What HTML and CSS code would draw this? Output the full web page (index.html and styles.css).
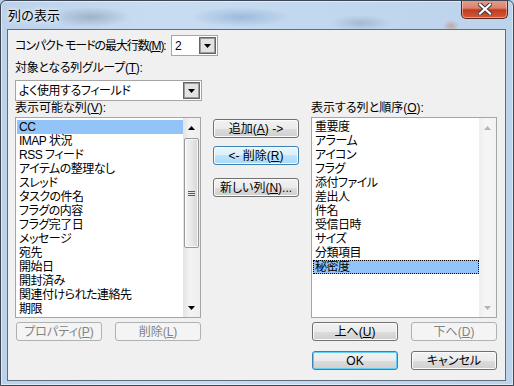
FILE: index.html
```html
<!DOCTYPE html>
<html lang="ja">
  <head>
    <meta charset="UTF-8" />
    <meta name="viewport" content="width=device-width, initial-scale=1.0" />
    <title>列の表示</title>
    <link rel="stylesheet" href="styles.css">
  </head>
  <body>
    <div class="window">
      <div class="titlebar">
        <span class="title">列の表示</span>
        <div class="close-btn">
          <svg width="14" height="12" viewBox="0 0 14 12">
            <path d="M2 1.5 L12 10.5 M12 1.5 L2 10.5" stroke="#3b3b3b" stroke-width="4.2" stroke-linecap="square" />
            <path d="M2 1.5 L12 10.5 M12 1.5 L2 10.5" stroke="#ffffff" stroke-width="2.2" stroke-linecap="square" />
          </svg>
        </div>
      </div>

      <div class="client">
        <div class="row-compact">
          <span class="lbl lbl-compact">コンパクト モードの最大行数(<u>M</u>):</span>
          <div class="combo combo-small">
            <span class="combo-text">2</span>
            <span class="drop">
              <svg width="7" height="4" viewBox="0 0 7 4"><polygon points="0,0 7,0 3.5,4" fill="#000" /></svg>
            </span>
          </div>
        </div>

        <div class="lbl lbl-group">対象となる列グループ(<u>T</u>):</div>
        <div class="combo combo-wide">
          <span class="combo-text">よく使用するフィールド</span>
          <span class="drop">
            <svg width="7" height="4" viewBox="0 0 7 4"><polygon points="0,0 7,0 3.5,4" fill="#000" /></svg>
          </span>
        </div>

        <div class="columns">
          <div class="lbl">表示可能な列(<u>V</u>):</div>
          <div></div>
          <div class="lbl">表示する列と順序(<u>O</u>):</div>

          <!-- available columns -->
          <div class="listbox">
            <ul class="items">
              <li class="selected">CC</li>
              <li>IMAP 状況</li>
              <li>RSS フィード</li>
              <li>アイテムの整理なし</li>
              <li>スレッド</li>
              <li>タスクの件名</li>
              <li>フラグの内容</li>
              <li>フラグ完了日</li>
              <li>メッセージ</li>
              <li>宛先</li>
              <li>開始日</li>
              <li>開封済み</li>
              <li>関連付けられた連絡先</li>
              <li>期限</li>
            </ul>
            <div class="scrollbar">
              <div class="arrow arrow-up">
                <svg width="7" height="4" viewBox="0 0 7 4"><polygon points="0,4 7,4 3.5,0" fill="#000" /></svg>
              </div>
              <div class="track">
                <div class="thumb"><span class="grip"></span></div>
              </div>
              <div class="arrow arrow-down">
                <svg width="7" height="4" viewBox="0 0 7 4"><polygon points="0,0 7,0 3.5,4" fill="#000" /></svg>
              </div>
            </div>
          </div>

          <div class="mid-buttons">
            <div class="btn">追加(<u>A</u>) -&gt;</div>
            <div class="btn btn-hot">&lt;- 削除(<u>R</u>)</div>
            <div class="btn btn-new">新しい列(<u>N</u>)...</div>
          </div>

          <!-- shown columns -->
          <div class="listbox">
            <ul class="items">
              <li>重要度</li>
              <li>アラーム</li>
              <li>アイコン</li>
              <li>フラグ</li>
              <li>添付ファイル</li>
              <li>差出人</li>
              <li>件名</li>
              <li>受信日時</li>
              <li>サイズ</li>
              <li>分類項目</li>
              <li class="selected focused">秘密度</li>
            </ul>
            <div class="scrollbar scrollbar-off">
              <div class="arrow arrow-up">
                <svg width="7" height="4" viewBox="0 0 7 4"><polygon points="0,4 7,4 3.5,0" fill="#b4b4b4" /></svg>
              </div>
              <div class="track"></div>
              <div class="arrow arrow-down">
                <svg width="7" height="4" viewBox="0 0 7 4"><polygon points="0,0 7,0 3.5,4" fill="#b4b4b4" /></svg>
              </div>
            </div>
          </div>

          <div class="btn-pair">
            <div class="btn btn-off">プロパティ(<u>P</u>)</div>
            <div class="btn btn-off">削除(<u>L</u>)</div>
          </div>
          <div></div>
          <div class="btn-pair">
            <div class="btn">上へ(<u>U</u>)</div>
            <div class="btn btn-off">下へ(<u>D</u>)</div>
          </div>

          <div></div>
          <div></div>
          <div class="btn-pair ok-row">
            <div class="btn btn-default">OK</div>
            <div class="btn">キャンセル</div>
          </div>
        </div>
      </div>
    </div>
  </body>
</html>
```

FILE: styles.css
```css
body {
  margin: 0;
  padding: 0;
  font-family: "Liberation Sans", "Noto Sans CJK JP", sans-serif;
  font-size: 12px;
  color: #000;
  background-color: #b9cfe6;
}

.window {
  width: 514px;
  height: 386px;
  box-sizing: border-box;
  border: 1px solid #3d4754;
  border-radius: 6px 6px 0 0;
  display: flex;
  flex-direction: column;
  overflow: hidden;
  background:
    radial-gradient(ellipse 40px 10px at 90px 16px, rgba(90, 110, 130, 0.35), transparent),
    radial-gradient(ellipse 50px 10px at 240px 16px, rgba(70, 110, 170, 0.3), transparent),
    radial-gradient(ellipse 30px 8px at 360px 22px, rgba(80, 100, 120, 0.25), transparent),
    radial-gradient(ellipse 8px 6px at 450px 25px, rgba(200, 120, 90, 0.5), transparent),
    linear-gradient(to right, #bcd2ea 0%, #c8dcf1 30%, #c2d8ef 60%, #bcd3ec 100%);
  box-shadow: inset 0 0 0 1px rgba(255, 255, 255, 0.5);
}

.titlebar {
  height: 28px;
  display: flex;
  align-items: flex-start;
  justify-content: space-between;
}

.title {
  margin: 8px 0 0 7px;
  font-size: 13px;
  line-height: 14px;
  text-shadow: 0 0 6px rgba(255, 255, 255, 0.9), 0 0 3px rgba(255, 255, 255, 0.9);
}

.close-btn {
  width: 47px;
  height: 19px;
  margin-right: 5px;
  margin-top: -1px;
  box-sizing: border-box;
  border: 1px solid #5e2219;
  border-top: none;
  border-radius: 0 0 5px 5px;
  background: linear-gradient(#e8a08d 0%, #d9826c 45%, #c4391d 55%, #cf5c3a 100%);
  box-shadow: inset 0 0 0 1px rgba(255, 220, 210, 0.5);
  display: flex;
  align-items: center;
  justify-content: center;
}

.client {
  flex: 1;
  margin: 0 7px 4px 6px;
  border: 1px solid #5f6d7c;
  background-color: #f0f0f0;
  padding: 5px 7px 0 7px;
  font-feature-settings: "palt" 1;
}

.lbl {
  line-height: 14px;
  white-space: nowrap;
}

u {
  text-decoration: underline;
  text-underline-offset: 1px;
}

.row-compact {
  display: flex;
  align-items: center;
  height: 21px;
}

.lbl-compact {
  width: 156px;
  letter-spacing: -1.1px;
}

.lbl-group {
  margin-top: 5px;
  letter-spacing: -0.3px;
}

/* combo boxes */
.combo {
  height: 21px;
  box-sizing: border-box;
  border: 1px solid #a5a5a5;
  background-color: #fff;
  display: flex;
  align-items: center;
  justify-content: space-between;
}

.combo-small {
  width: 47px;
}

.combo-wide {
  width: 187px;
  margin-top: 5px;
}

.combo-text {
  padding-left: 3px;
  line-height: 14px;
  letter-spacing: -0.4px;
}

.drop {
  width: 17px;
  height: 17px;
  margin-right: 1px;
  box-sizing: border-box;
  border: 1px solid #646464;
  box-shadow: inset 0 0 0 1px #9a9a9a;
  background-color: #e2e2e2;
  display: flex;
  align-items: center;
  justify-content: center;
}

/* lists + buttons */
.columns {
  display: grid;
  grid-template-columns: 186px 86px 186px;
  column-gap: 12px;
}

.listbox {
  margin-top: 2px;
  height: 201px;
  box-sizing: border-box;
  border: 1px solid #a5a5a5;
  background-color: #fff;
  display: flex;
}

.items {
  flex: 1;
  list-style: none;
  margin: 0;
  padding: 2px 0 0 1px;
}

.items li {
  height: 14px;
  line-height: 14px;
  padding-left: 2px;
  white-space: nowrap;
  letter-spacing: -0.5px;
}

.items li.selected {
  background-color: #92c4f8;
}

.items li.focused {
  outline: 1px dotted #000;
  outline-offset: -1px;
}

.scrollbar {
  width: 17px;
  display: flex;
  flex-direction: column;
  background: linear-gradient(to right, #e3e3e3, #f3f3f3 40%, #eeeeee);
}

.scrollbar-off {
  background: linear-gradient(to right, #eeeeee, #f6f6f6 40%, #f2f2f2);
}

.arrow {
  height: 17px;
  box-sizing: border-box;
  display: flex;
  align-items: center;
  justify-content: center;
}

.arrow-up {
  padding-top: 3px;
}

.arrow-down {
  padding-bottom: 1px;
}

.track {
  flex: 1;
}

.thumb {
  margin: 3px 1px 0 1px;
  height: 110px;
  box-sizing: border-box;
  border: 1px solid #989898;
  border-radius: 2px;
  background: linear-gradient(to right, #f4f4f4, #e8e8e8 50%, #d6d6d6);
  box-shadow: inset 0 0 0 1px rgba(255, 255, 255, 0.8);
  display: flex;
  align-items: center;
  justify-content: center;
}

.grip {
  width: 7px;
  height: 5px;
  background: repeating-linear-gradient(#5a5a5a 0, #5a5a5a 1px, transparent 1px, transparent 2px);
}

.mid-buttons {
  display: flex;
  flex-direction: column;
  margin-top: 4px;
}

.btn {
  width: 86px;
  height: 19px;
  box-sizing: border-box;
  border: 1px solid #707070;
  border-radius: 3px;
  background: linear-gradient(#f2f2f2 0%, #ebebeb 50%, #dddddd 50%, #cfcfcf 100%);
  box-shadow: inset 0 0 0 1px #fbfbfb;
  display: flex;
  align-items: center;
  justify-content: center;
  line-height: 14px;
  white-space: nowrap;
}

.btn-hot {
  margin-top: 8px;
  border-color: #3c7fb1;
  background: linear-gradient(#eaf6fd 0%, #d9f0fc 50%, #bee6fd 50%, #a7d9f5 100%);
}

.btn-new {
  margin-top: 13px;
}

.btn-off {
  border-color: #adb2b5;
  background: #f4f4f4;
  box-shadow: none;
  color: #838383;
}

.btn-default {
  border-color: #3c7fb1;
  box-shadow: inset 0 0 0 1px #62d0f6;
}

.btn-pair {
  display: flex;
  justify-content: space-between;
  padding-left: 1px;
  margin-top: 4px;
}

.ok-row {
  margin-top: 10px;
}
```
